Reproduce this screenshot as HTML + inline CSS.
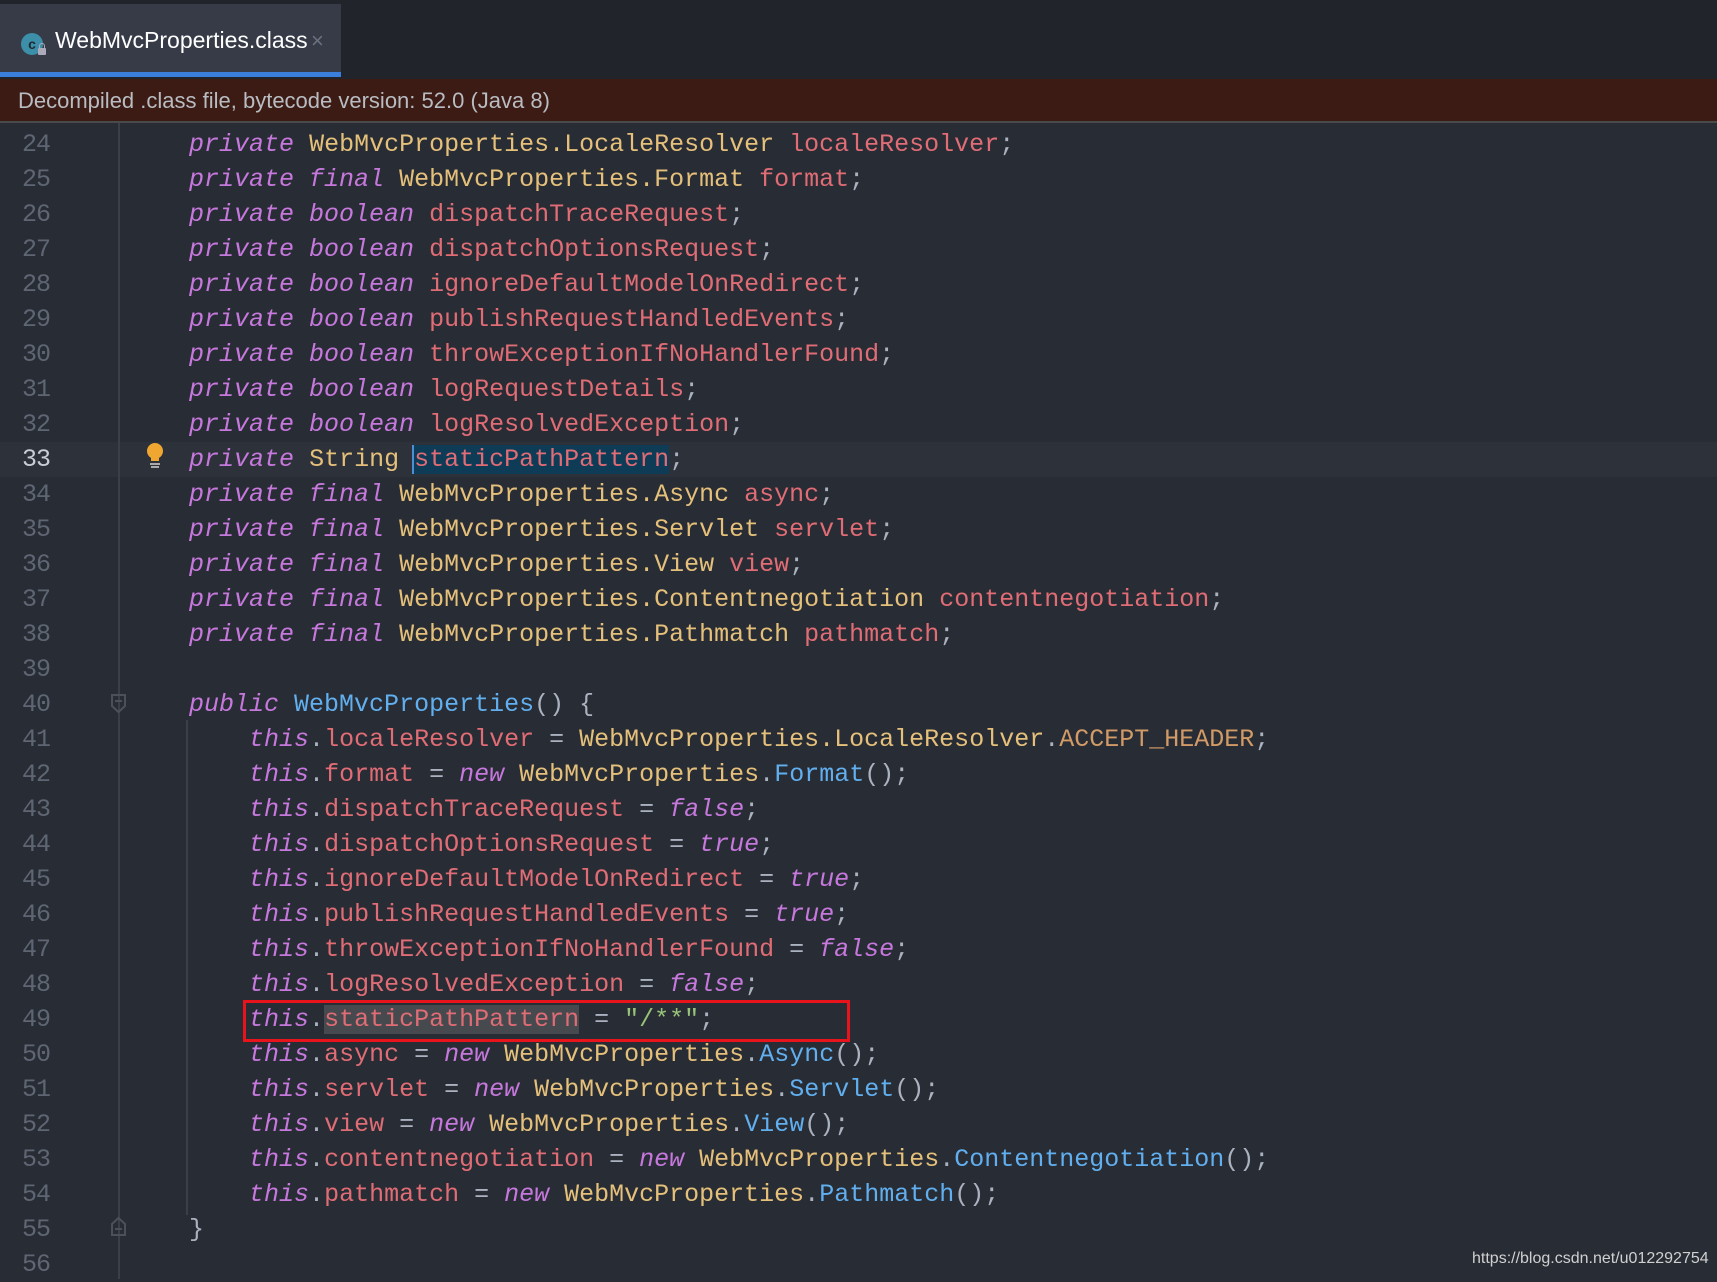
<!DOCTYPE html>
<html><head><meta charset="utf-8"><style>
html,body{margin:0;padding:0}
body{width:1717px;height:1279px;background:#282c34;position:relative;overflow:hidden;font-family:"Liberation Sans",sans-serif}
#tabbar{position:absolute;left:0;top:0;width:1717px;height:79px;background:#21252b}
#tab{position:absolute;left:0;top:4px;width:341px;height:68px;background:#363b47}
#tabline{position:absolute;left:0;top:72px;width:341px;height:5px;background:#3a7fdb}
#tab .ic{position:absolute;left:21px;top:29px;width:22px;height:22px;border-radius:50%;background:#3d8ea8;color:#1e2a33;font-size:14px;line-height:22px;text-align:center;font-weight:bold}
#tab .lock{position:absolute;left:38px;top:44px;width:8px;height:7px;background:#aab;border-radius:1px}
#tab .lk2{position:absolute;left:39px;top:39px;width:4px;height:5px;border:1.5px solid #aab;border-bottom:none;border-radius:3px 3px 0 0}
#tab .t{position:absolute;left:55px;top:23px;font-size:23px;color:#fff}
#tab .x{position:absolute;left:311px;top:24px;font-size:22px;color:#6b717d}
#banner{position:absolute;left:0;top:79px;width:1717px;height:44px;background:#3b1b13;border-bottom:2px solid #4a4a4a;box-sizing:border-box}
#banner span{position:absolute;left:18px;top:9px;font-size:22px;color:#b9bcc2}
#gline{position:absolute;left:118px;top:123px;width:2px;height:1156px;background:#3b3f47}
#guide{position:absolute;left:186px;top:720px;width:2px;height:495px;background:#3b3f47}
#cur{position:absolute;left:0;top:442px;width:1717px;height:35px;background:#2c313a}
.ln{position:absolute;left:0;width:50px;text-align:right;font:25px/35px "Liberation Mono",monospace;color:#5f6673;letter-spacing:-1px}
pre{position:absolute;left:129px;top:127px;margin:0;font:25px/35px "Liberation Mono",monospace;color:#abb2bf}
.k{color:#c678dd;font-style:italic}.ty{color:#e5c07b}.f{color:#e06c75}.m{color:#61afef}.s{color:#98c379}.c{color:#d19a66}
.sel{background:#0e3c57;box-shadow:-2px 0 0 #4d8fd6}
.hl{background:#464a4f}
#box{position:absolute;left:243px;top:1000px;width:607px;height:42px;border:3px solid #e8131b;box-sizing:border-box}
#bulb{position:absolute;left:145px;top:442px}
#wm{position:absolute;left:1472px;top:1250px;font-size:16px;color:#d0d0d0}
</style></head><body>
<div id="tabbar"><div id="tab"><div class="ic">c</div><div class="lk2"></div><div class="lock"></div><div class="t">WebMvcProperties.class</div><div class="x">×</div></div><div id="tabline"></div></div>
<div id="banner"><span>Decompiled .class file, bytecode version: 52.0 (Java 8)</span></div>
<div id="cur"></div>
<div id="gline"></div><div id="guide"></div>
<svg id="bulb" width="20" height="30" viewBox="0 0 20 30"><circle cx="10" cy="9" r="8" fill="#f0a732"/><rect x="6" y="14" width="8" height="5" fill="#f0a732"/><rect x="5" y="21" width="10" height="2" fill="#aaa"/><rect x="6" y="24" width="8" height="2" fill="#aaa"/></svg>
<svg style="position:absolute;left:111px;top:694px" width="16" height="20"><path d="M1 1H14V12L7.5 18L1 12Z" fill="none" stroke="#4b5059" stroke-width="2"/><path d="M4 7H11" stroke="#4b5059" stroke-width="2"/></svg>
<svg style="position:absolute;left:111px;top:1216px" width="16" height="20"><path d="M1 19H14V8L7.5 2L1 8Z" fill="none" stroke="#4b5059" stroke-width="2"/><path d="M4 13H11" stroke="#4b5059" stroke-width="2"/></svg>
<div class="ln" style="top:127px">24<br>25<br>26<br>27<br>28<br>29<br>30<br>31<br>32<br><span style="color:#c8ccd4">33</span><br>34<br>35<br>36<br>37<br>38<br>39<br>40<br>41<br>42<br>43<br>44<br>45<br>46<br>47<br>48<br>49<br>50<br>51<br>52<br>53<br>54<br>55<br>56</div>
<pre>    <span class="k">private</span> <span class="ty">WebMvcProperties.LocaleResolver</span> <span class="f">localeResolver</span>;
    <span class="k">private final</span> <span class="ty">WebMvcProperties.Format</span> <span class="f">format</span>;
    <span class="k">private boolean</span> <span class="f">dispatchTraceRequest</span>;
    <span class="k">private boolean</span> <span class="f">dispatchOptionsRequest</span>;
    <span class="k">private boolean</span> <span class="f">ignoreDefaultModelOnRedirect</span>;
    <span class="k">private boolean</span> <span class="f">publishRequestHandledEvents</span>;
    <span class="k">private boolean</span> <span class="f">throwExceptionIfNoHandlerFound</span>;
    <span class="k">private boolean</span> <span class="f">logRequestDetails</span>;
    <span class="k">private boolean</span> <span class="f">logResolvedException</span>;
    <span class="k">private</span> <span class="ty">String</span> <span class="f sel">staticPathPattern</span>;
    <span class="k">private final</span> <span class="ty">WebMvcProperties.Async</span> <span class="f">async</span>;
    <span class="k">private final</span> <span class="ty">WebMvcProperties.Servlet</span> <span class="f">servlet</span>;
    <span class="k">private final</span> <span class="ty">WebMvcProperties.View</span> <span class="f">view</span>;
    <span class="k">private final</span> <span class="ty">WebMvcProperties.Contentnegotiation</span> <span class="f">contentnegotiation</span>;
    <span class="k">private final</span> <span class="ty">WebMvcProperties.Pathmatch</span> <span class="f">pathmatch</span>;

    <span class="k">public</span> <span class="m">WebMvcProperties</span>() {
        <span class="k">this</span>.<span class="f">localeResolver</span> = <span class="ty">WebMvcProperties.LocaleResolver</span>.<span class="c">ACCEPT_HEADER</span>;
        <span class="k">this</span>.<span class="f">format</span> = <span class="k">new</span> <span class="ty">WebMvcProperties</span>.<span class="m">Format</span>();
        <span class="k">this</span>.<span class="f">dispatchTraceRequest</span> = <span class="k">false</span>;
        <span class="k">this</span>.<span class="f">dispatchOptionsRequest</span> = <span class="k">true</span>;
        <span class="k">this</span>.<span class="f">ignoreDefaultModelOnRedirect</span> = <span class="k">true</span>;
        <span class="k">this</span>.<span class="f">publishRequestHandledEvents</span> = <span class="k">true</span>;
        <span class="k">this</span>.<span class="f">throwExceptionIfNoHandlerFound</span> = <span class="k">false</span>;
        <span class="k">this</span>.<span class="f">logResolvedException</span> = <span class="k">false</span>;
        <span class="k">this</span>.<span class="f hl">staticPathPattern</span> = <span class="s">"/**"</span>;
        <span class="k">this</span>.<span class="f">async</span> = <span class="k">new</span> <span class="ty">WebMvcProperties</span>.<span class="m">Async</span>();
        <span class="k">this</span>.<span class="f">servlet</span> = <span class="k">new</span> <span class="ty">WebMvcProperties</span>.<span class="m">Servlet</span>();
        <span class="k">this</span>.<span class="f">view</span> = <span class="k">new</span> <span class="ty">WebMvcProperties</span>.<span class="m">View</span>();
        <span class="k">this</span>.<span class="f">contentnegotiation</span> = <span class="k">new</span> <span class="ty">WebMvcProperties</span>.<span class="m">Contentnegotiation</span>();
        <span class="k">this</span>.<span class="f">pathmatch</span> = <span class="k">new</span> <span class="ty">WebMvcProperties</span>.<span class="m">Pathmatch</span>();
    }
</pre>
<div id="box"></div>
<div id="wm">https://blog.csdn.net/u012292754</div>
</body></html>
